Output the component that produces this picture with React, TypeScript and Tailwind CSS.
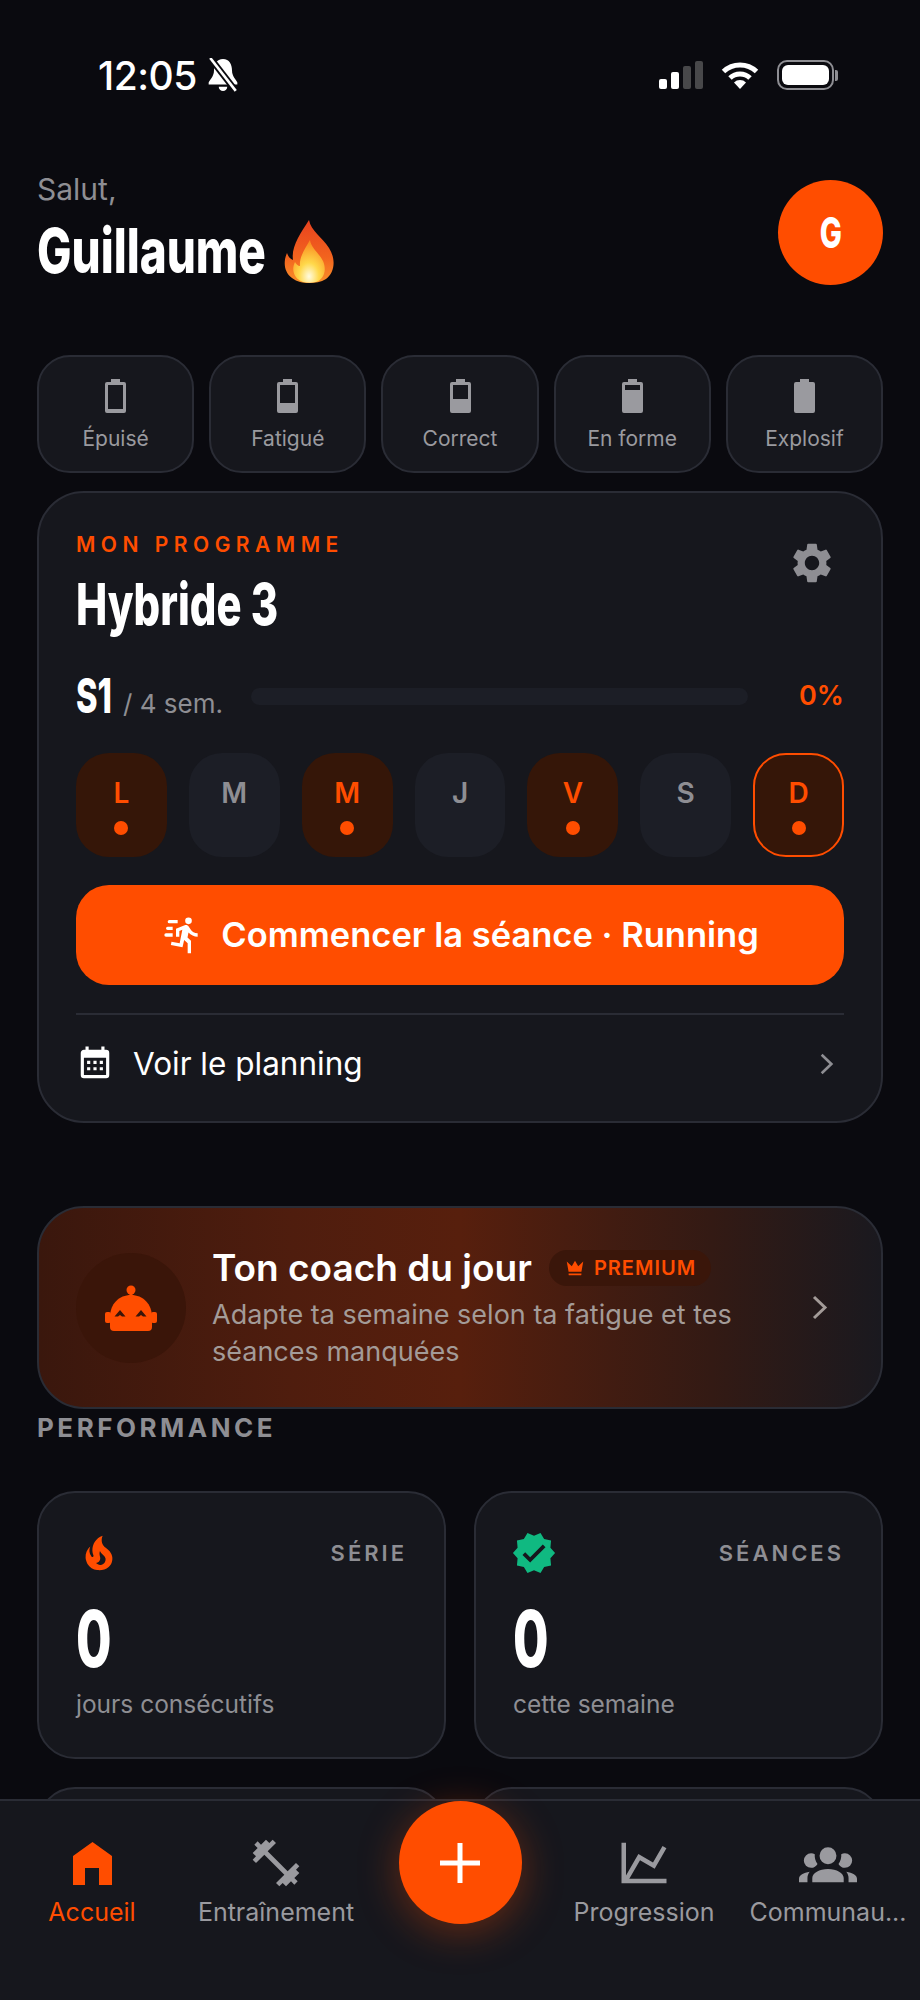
const ORANGE = "#ff4d00";

// Height of the empty part of each mood battery
const MOODS = [
  { label: "Épuisé", hole: 24 },
  { label: "Fatigué", hole: 18 },
  { label: "Correct", hole: 14 },
  { label: "En forme", hole: 5 },
  { label: "Explosif", hole: 0 },
];

const DAYS = [
  { letter: "L", active: true },
  { letter: "M", active: false },
  { letter: "M", active: true },
  { letter: "J", active: false },
  { letter: "V", active: true },
  { letter: "S", active: false },
  { letter: "D", active: true, today: true },
];

function Mdi({ d, className, evenOdd }: { d: string; className?: string; evenOdd?: boolean }) {
  return (
    <svg viewBox="0 0 24 24" className={className} fill="currentColor">
      <path d={d} fillRule={evenOdd ? "evenodd" : undefined} />
    </svg>
  );
}

function Chevron({ className }: { className?: string }) {
  return (
    <svg viewBox="0 0 17 25" className={className} fill="none" stroke="currentColor" strokeWidth="3">
      <path d="M3 2L14 12.500L3 23" />
    </svg>
  );
}

function MoodBattery({ hole }: { hole: number }) {
  return (
    <svg viewBox="0 0 21 34" className="h-[34px] w-[21px]" fill="#9a9a9f">
      <path d="M6 0h9v3h4a2 2 0 0 1 2 2v27a2 2 0 0 1-2 2H2a2 2 0 0 1-2-2V5a2 2 0 0 1 2-2h4z" />
      {hole > 0 && <rect x="3" y="6" width="15" height={hole} fill="#16171d" />}
    </svg>
  );
}

function StatusBar() {
  return (
    <div className="flex h-[32px] items-center justify-between pl-[98px] pr-[82px]">
      <div className="flex items-center gap-[10px]">
        <span className="text-[39px] font-medium leading-none tracking-[-0.5px] text-white">12:05</span>
        <svg viewBox="0 0 30 32" className="h-[34px] w-[32px]">
          <path d="M15 1c6 0 8.500 5 8.500 11 0 5 3.500 8 5 11v2H1.500v-2c1.500-3 5-6 5-11C6.500 6 9 1 15 1z" fill="#fff" />
          <path d="M11 27h8a4 4 0 0 1-8 0z" fill="#fff" />
          <path d="M3 0l24 31" stroke="#0a0a0f" strokeWidth="6" />
          <path d="M3 0l24 31" stroke="#fff" strokeWidth="2.500" />
        </svg>
      </div>
      <div className="flex items-center">
        <div className="flex h-[28px] items-end gap-[4px]">
          <div className="h-[10px] w-[8px] rounded-[2px] bg-white" />
          <div className="h-[17px] w-[8px] rounded-[2px] bg-white" />
          <div className="h-[23px] w-[8px] rounded-[2px] bg-[#48484a]" />
          <div className="h-[28px] w-[8px] rounded-[2px] bg-[#48484a]" />
        </div>
        <svg viewBox="0 0 38 28" className="ml-[18px] h-[28px] w-[38px]" fill="none" stroke="#fff" strokeWidth="5">
          <path d="M2.500 10.500a24 24 0 0 1 33 0" />
          <path d="M9 17a14.500 14.500 0 0 1 20 0" />
          <path d="M19 28l-6-6.500a8.500 8.500 0 0 1 12 0z" fill="#fff" stroke="none" />
        </svg>
        <div className="ml-[18px] flex items-center">
          <div className="flex h-[30px] w-[57px] rounded-[10px] border-2 border-[#8e8e93] p-[3px]">
            <div className="flex-1 rounded-[6px] bg-white" />
          </div>
          <div className="ml-[1px] h-[11px] w-[3px] rounded-r-[2px] bg-[#8e8e93]" />
        </div>
      </div>
    </div>
  );
}

function FlameEmoji() {
  return (
    <svg viewBox="0 0 51 63" className="ml-[22px] h-[63px] w-[51px]">
      <defs>
        <linearGradient id="outer" x1="0" y1="0" x2="0" y2="1">
          <stop offset="0" stopColor="#e8421f" />
          <stop offset="0.6" stopColor="#f2641e" />
          <stop offset="1" stopColor="#f9902a" />
        </linearGradient>
        <radialGradient id="inner" cx="0.5" cy="0.85" r="0.8">
          <stop offset="0" stopColor="#fffbe0" />
          <stop offset="0.4" stopColor="#ffd84a" />
          <stop offset="1" stopColor="#f98a1f" />
        </radialGradient>
      </defs>
      <path d="M25 0c2 11 13 17 20 28 7 11 6 24-3 31-5 3-11 4-17 4S13 62 8 58C0 52-1 42 3 33c1 3 3 6 6 7C7 27 16 14 25 0z" fill="url(#outer)" />
      <path d="M26 20c1 8 9 13 13 21 4 9 1 18-7 21-4 1-9 1-13 0C10 59 7 50 11 42c1 2 3 4 5 4-1-9 5-17 10-26z" fill="url(#inner)" />
    </svg>
  );
}

function NavItem({ label, active, children }: { label: string; active?: boolean; children: React.ReactNode }) {
  return (
    <div className={`flex flex-col items-center pt-[40px] ${active ? "text-[#ff4d00]" : "text-[#9a9a9f]"}`}>
      <div className="flex h-[44px] items-center justify-center">{children}</div>
      <span className="mt-[12px] whitespace-nowrap text-[25px] leading-[30px]">{label}</span>
    </div>
  );
}

function StatCard({ icon, title, value, caption }: { icon: React.ReactNode; title: string; value: string; caption: string }) {
  return (
    <div className="h-[268px] rounded-[38px] border-2 border-[#2a2c35] bg-[#16171d] px-[37px] pt-[36px]">
      <div className="flex h-[48px] items-center justify-between">
        {icon}
        <span className="text-[22px] font-semibold tracking-[3px] text-[#8e8e93]">{title}</span>
      </div>
      <div className="mt-[20px] h-[84px] origin-left scale-x-[0.66] text-[78px] font-extrabold leading-[84px] text-white">{value}</div>
      <div className="mt-[7px] text-[24.5px] leading-[32px] text-[#8e8e93]">{caption}</div>
    </div>
  );
}

export default function App() {
  return (
    <div className="relative h-[2000px] w-[920px] overflow-hidden bg-[#0a0a0f] pt-[59px] font-[Inter,sans-serif]">
      <StatusBar />

      <div className="mt-[88px] flex items-center justify-between px-[37px]">
        <div className="-mt-[8px]">
          <div className="text-[30px] leading-[36px] text-[#8e8e93]">Salut,</div>
          <div className="mt-[10px] flex items-center">
            <div className="w-[225px] whitespace-nowrap">
              <span className="inline-block origin-left scale-x-[0.74] text-[62px] font-extrabold leading-[68px] text-white">Guillaume</span>
            </div>
            <FlameEmoji />
          </div>
        </div>
        <div className="flex h-[105px] w-[105px] items-center justify-center rounded-full bg-[#ff4d00] text-white">
          <span className="scale-x-[0.7] text-[42px] font-extrabold">G</span>
        </div>
      </div>

      <div className="mt-[70px] flex gap-[15px] px-[37px]">
        {MOODS.map((mood) => (
          <div key={mood.label} className="flex h-[118px] flex-1 flex-col items-center rounded-[33px] border-2 border-[#2a2c35] bg-[#16171d] pt-[22px]">
            <MoodBattery hole={mood.hole} />
            <span className="mt-[12px] text-[21px] leading-[28px] text-[#9a9a9f]">{mood.label}</span>
          </div>
        ))}
      </div>

      <div className="mx-[37px] mt-[18px] rounded-[47px] border-2 border-[#2a2c35] bg-[#16171d] px-[37px] pt-[38px]">
        <div className="flex items-start justify-between">
          <div>
            <div className="text-[21px] font-semibold leading-[28px] tracking-[5.500px] text-[#ff4d00]">MON PROGRAMME</div>
            <div className="mt-[13px] w-[201px] whitespace-nowrap">
              <span className="inline-block origin-left scale-x-[0.72] text-[58px] font-extrabold leading-[64px] text-white">Hybride 3</span>
            </div>
          </div>
          <svg viewBox="0 0 24 24" className="mr-[8px] mt-[8px] h-[48px] w-[48px]" fill="#8e8e93">
            <path d="M19.140 12.940c.040-.300.060-.610.060-.940 0-.320-.020-.640-.070-.940l2.030-1.580a.490.490 0 0 0 .120-.610l-1.920-3.320a.488.488 0 0 0-.590-.220l-2.390.960c-.500-.380-1.030-.700-1.620-.940l-.360-2.540a.484.484 0 0 0-.480-.410h-3.840c-.240 0-.430.170-.470.410l-.360 2.540c-.590.240-1.130.570-1.620.940l-2.390-.960c-.220-.080-.470 0-.590.220L2.740 8.870c-.120.210-.080.470.120.610l2.030 1.580c-.050.300-.090.630-.090.940s.020.640.070.940l-2.030 1.580a.490.490 0 0 0-.120.610l1.920 3.320c.120.220.370.290.590.220l2.390-.960c.500.380 1.030.700 1.620.940l.360 2.540c.050.240.240.410.480.410h3.840c.240 0 .440-.170.470-.410l.360-2.540c.590-.240 1.130-.560 1.620-.940l2.390.960c.220.080.470 0 .590-.220l1.920-3.320c.120-.220.070-.470-.120-.610l-2.010-1.580zM12 15.600c-1.980 0-3.600-1.620-3.600-3.600s1.620-3.600 3.600-3.600 3.600 1.620 3.600 3.600-1.620 3.600-3.600 3.600z" />
          </svg>
        </div>

        <div className="mt-[34px] flex items-center">
          <div className="flex w-[175px] items-baseline">
            <div className="w-[36px] whitespace-nowrap">
              <span className="inline-block origin-left scale-x-[0.68] text-[48px] font-extrabold leading-[52px] text-white">S1</span>
            </div>
            <span className="ml-[11px] whitespace-nowrap text-[26px] text-[#8e8e93]">/ 4 sem.</span>
          </div>
          <div className="h-[17px] w-[497px] rounded-full bg-[#1c1e26]" />
          <span className="ml-auto text-[27px] font-semibold text-[#ff4d00]">0%</span>
        </div>

        <div className="mt-[30px] grid grid-cols-7 gap-[22px]">
          {DAYS.map((day, i) => (
            <div
              key={i}
              className={`flex h-[104px] flex-col items-center rounded-[33px] ${day.active ? "bg-[#351608] text-[#ff4d00]" : "bg-[#1c1e26] text-[#8e8e93]"} ${day.today ? "border-2 border-[#ff4d00] pt-[20px]" : "pt-[22px]"}`}
            >
              <span className="text-[28px] font-semibold leading-[36px]">{day.letter}</span>
              {day.active && <div className="mt-[10px] h-[14px] w-[14px] rounded-full bg-[#ff4d00]" />}
            </div>
          ))}
        </div>

        <div className="mt-[28px] flex h-[100px] items-center justify-center gap-[20px] rounded-[33px] bg-[#ff4d00] text-white">
          <Mdi
            className="h-[40px] w-[40px]"
            d="M16.5,5.5A2,2 0 0,0 18.5,3.5A2,2 0 0,0 16.5,1.5A2,2 0 0,0 14.5,3.5A2,2 0 0,0 16.5,5.5M12.9,19.4L13.9,15L16,17V23H18V15.500L15.9,13.500L16.5,10.5C17.89,12.09 19.89,13 22,13V11C20.24,11.03 18.6,10.11 17.7,8.6L16.7,7C16.34,6.4 15.7,6 15,6C14.7,6 14.5,6.1 14.2,6.1L9,8.3V13H11V9.6L12.8,8.9L11.2,17L6.3,16L5.9,18L12.9,19.4M4,9A1,1 0 0,1 3,8A1,1 0 0,1 4,7H7V9H4M5,5A1,1 0 0,1 4,4A1,1 0 0,1 5,3H10V5H5M3,13A1,1 0 0,1 2,12A1,1 0 0,1 3,11H7V13H3Z"
          />
          <span className="text-[34.5px] font-semibold">Commencer la séance · Running</span>
        </div>

        <div className="mt-[28px] flex h-[108px] items-center border-t-2 border-[#2a2c35] pb-[8px] text-white">
          <Mdi
            className="h-[38px] w-[38px]"
            d="M9,10H7V12H9V10M13,10H11V12H13V10M17,10H15V12H17V10M19,3H18V1H16V3H8V1H6V3H5C3.89,3 3,3.9 3,5V19A2,2 0 0,0 5,21H19A2,2 0 0,0 21,19V5A2,2 0 0,0 19,3M19,19H5V8H19V19M9,14H7V16H9V14M13,14H11V16H13V14M17,14H15V16H17V14Z"
          />
          <span className="ml-[19px] text-[31.5px]">Voir le planning</span>
          <Chevron className="ml-auto mr-[10px] h-[22px] w-[15px] text-[#8e8e93]" />
        </div>
      </div>

      <div className="mx-[37px] mt-[83px] flex h-[203px] items-center rounded-[47px] border-2 border-[#2a2c35] bg-[linear-gradient(90deg,#3a170d_0%,#4f1d0e_30%,#571f0d_50%,#331a14_80%,#1a191f_100%)] pl-[37px]">
        <div className="flex h-[110px] w-[110px] shrink-0 items-center justify-center rounded-full bg-[#3a1509]">
          <svg viewBox="0 0 52 46" className="h-[46px] w-[52px]" fill={ORANGE}>
            <circle cx="26" cy="5" r="4.500" />
            <rect x="24.500" y="6" width="3" height="8" />
            <path d="M5 32C5 19 14 10 26 10s21 9 21 22v10a4 4 0 0 1-4 4H9a4 4 0 0 1-4-4z" />
            <rect x="0" y="27" width="6" height="11" rx="2" />
            <rect x="46" y="27" width="6" height="11" rx="2" />
            <path d="M15 25l5.500 6.500h-3.500l-2-1.500-2 1.500H9.500z M36 25l5.500 6.500H38l-2-1.500-2 1.500h-3.500z" fill="#3a1509" />
          </svg>
        </div>
        <div className="ml-[26px] min-w-0 flex-1">
          <div className="flex items-center">
            <span className="text-[37px] font-semibold leading-[44px] text-white">Ton coach du jour</span>
            <div className="ml-[17px] flex h-[36px] items-center gap-[8px] rounded-full bg-[#3a160a] px-[15px] text-[#ff4d00]">
              <Mdi className="h-[22px] w-[22px]" d="M5 16L3 5L8.5 10L12 4L15.5 10L21 5L19 16H5M19 19C19 19.6 18.6 20 18 20H6C5.4 20 5 19.6 5 19V18H19V19Z" />
              <span className="text-[20px] font-semibold tracking-[1px]">PREMIUM</span>
            </div>
          </div>
          <div className="mt-[6px] w-[560px] text-[27px] leading-[37px] text-[#a39b98]">
            Adapte ta semaine selon ta fatigue et tes séances manquées
          </div>
        </div>
        <Chevron className="mr-[53px] h-[25px] w-[17px] text-[#a39b98]" />
      </div>

      <div className="ml-[37px] mt-[3px] text-[26px] font-bold leading-[32px] tracking-[3.500px] text-[#8e8e93]">PERFORMANCE</div>

      <div className="mt-[47px] grid grid-cols-2 gap-x-[28px] gap-y-[28px] px-[37px]">
        <StatCard
          title="SÉRIE"
          value="0"
          caption="jours consécutifs"
          icon={
            <Mdi
              className="h-[46px] w-[46px] text-[#ff4d00]"
              evenOdd
              d="M17.66 11.2C17.43 10.9 17.15 10.64 16.89 10.38C16.22 9.78 15.46 9.35 14.82 8.72C13.33 7.26 13 4.85 13.95 3C13 3.23 12.17 3.75 11.46 4.32C8.87 6.4 7.85 10.07 9.07 13.22C9.11 13.32 9.15 13.42 9.15 13.55C9.15 13.77 9 13.97 8.8 14.05C8.57 14.15 8.33 14.09 8.14 13.93C8.08 13.88 8.04 13.83 8 13.76C6.87 12.33 6.69 10.28 7.45 8.64C5.78 10 4.87 12.3 5 14.47C5.06 14.97 5.12 15.47 5.29 15.97C5.43 16.57 5.7 17.17 6 17.7C7.08 19.43 8.95 20.67 10.96 20.92C13.1 21.19 15.39 20.8 17.03 19.32C18.86 17.66 19.5 15 18.56 12.72L18.43 12.46C18.22 12 17.66 11.2 17.66 11.2M14.5 17.5C14.22 17.74 13.76 18 13.4 18.1C12.28 18.5 11.16 17.94 10.5 17.28C11.69 17 12.4 16.12 12.61 15.23C12.78 14.43 12.46 13.77 12.33 13C12.21 12.26 12.23 11.63 12.5 10.94C12.69 11.32 12.89 11.7 13.13 12C13.9 13 15.11 13.44 15.37 14.8C15.41 14.94 15.43 15.08 15.43 15.23C15.46 16.05 15.1 16.95 14.5 17.5H14.5Z"
            />
          }
        />
        <StatCard
          title="SÉANCES"
          value="0"
          caption="cette semaine"
          icon={
            <Mdi
              className="ml-[-2px] h-[46px] w-[46px] text-[#10b981]"
              d="M23,12L20.56,9.22L20.9,5.54L17.29,4.72L15.4,1.54L12,3L8.6,1.54L6.71,4.72L3.1,5.53L3.44,9.21L1,12L3.44,14.78L3.1,18.47L6.71,19.29L8.6,22.47L12,21L15.4,22.46L17.29,19.28L20.9,18.46L20.56,14.78L23,12M10,17L6,13L7.41,11.59L10,14.17L16.59,7.58L18,9L10,17Z"
            />
          }
        />
        <div className="h-[268px] rounded-[38px] border-2 border-[#2a2c35] bg-[#16171d]" />
        <div className="h-[268px] rounded-[38px] border-2 border-[#2a2c35] bg-[#16171d]" />
      </div>

      <div className="absolute inset-x-0 bottom-0 grid h-[201px] grid-cols-5 border-t-2 border-[#2a2c35] bg-[#16171d]">
        <NavItem label="Accueil" active>
          <svg viewBox="0 0 39 43" className="h-[43px] w-[39px]" fill="currentColor">
            <path d="M19.500 0L39 14V43H26V26H12V43H0V14Z" />
          </svg>
        </NavItem>
        <NavItem label="Entraînement">
          <Mdi
            className="h-[56px] w-[56px]"
            d="M20.57,14.86L22,13.43L20.57,12L17,15.57L8.43,7L12,3.43L10.57,2L9.14,3.43L7.71,2L5.57,4.14L4.14,2.71L2.71,4.14L4.14,5.57L2,7.71L3.43,9.14L2,10.57L3.43,12L7,8.43L15.57,17L12,20.57L13.43,22L14.86,20.57L16.29,22L18.43,19.86L19.86,21.29L21.29,19.86L19.86,18.43L22,16.29L20.57,14.86Z"
          />
        </NavItem>
        <div className="flex justify-center">
          <div className="flex h-[123px] w-[123px] items-center justify-center rounded-full bg-[#ff4d00] shadow-[0_8px_40px_rgba(255,77,0,0.35)]">
            <svg viewBox="0 0 40 40" className="h-[40px] w-[40px]" fill="#fff">
              <path d="M17.500 0h5v17.500H40v5H22.500V40h-5V22.500H0v-5h17.500z" />
            </svg>
          </div>
        </div>
        <NavItem label="Progression">
          <Mdi
            className="h-[54px] w-[54px]"
            d="M16,11.78L20.24,4.45L21.97,5.45L16.74,14.5L10.23,10.75L5.46,19H22V21H2V3H4V17.54L9.5,8L16,11.78Z"
          />
        </NavItem>
        <NavItem label="Communau...">
          <Mdi
            className="h-[58px] w-[58px]"
            d="M12,5.5A3.5,3.5 0 0,1 15.5,9A3.5,3.5 0 0,1 12,12.5A3.5,3.5 0 0,1 8.5,9A3.5,3.5 0 0,1 12,5.5M5,8C5.56,8 6.08,8.15 6.53,8.42C6.38,9.85 6.8,11.27 7.66,12.38C7.16,13.34 6.16,14 5,14A3,3 0 0,1 2,11A3,3 0 0,1 5,8M19,8A3,3 0 0,1 22,11A3,3 0 0,1 19,14C17.84,14 16.84,13.34 16.34,12.38C17.2,11.27 17.62,9.85 17.47,8.42C17.92,8.15 18.44,8 19,8M5.5,18.25C5.5,16.18 8.41,14.5 12,14.5C15.59,14.5 18.5,16.18 18.5,18.25V20H5.5V18.25M0,20V18.5C0,17.11 1.89,15.94 4.45,15.6C3.86,16.28 3.5,17.22 3.5,18.25V20H0M24,20H20.5V18.25C20.5,17.22 20.14,16.28 19.55,15.6C22.11,15.94 24,17.11 24,18.5V20Z"
          />
        </NavItem>
      </div>
    </div>
  );
}
